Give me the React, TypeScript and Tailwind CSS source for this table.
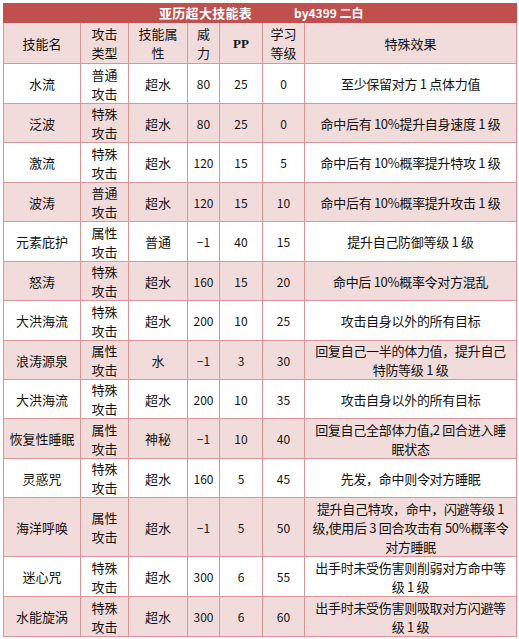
import React from "react";

type Row = {
  name: string;
  type: [string, string];
  attr: string;
  power: string;
  pp: string;
  level: string;
  effect: string[];
  h: string;
};

const rows: Row[] = [
  { name: "水流", type: ["普通", "攻击"], attr: "超水", power: "80", pp: "25", level: "0", effect: ["至少保留对方 1 点体力值"], h: "h-[40px]" },
  { name: "泛波", type: ["特殊", "攻击"], attr: "超水", power: "80", pp: "25", level: "0", effect: ["命中后有 10%提升自身速度 1 级"], h: "h-[39px]" },
  { name: "激流", type: ["特殊", "攻击"], attr: "超水", power: "120", pp: "15", level: "5", effect: ["命中后有 10%概率提升特攻 1 级"], h: "h-[40px]" },
  { name: "波涛", type: ["普通", "攻击"], attr: "超水", power: "120", pp: "15", level: "10", effect: ["命中后有 10%概率提升攻击 1 级"], h: "h-[39px]" },
  { name: "元素庇护", type: ["属性", "攻击"], attr: "普通", power: "−1", pp: "40", level: "15", effect: ["提升自己防御等级 1 级"], h: "h-[40px]" },
  { name: "怒涛", type: ["特殊", "攻击"], attr: "超水", power: "160", pp: "15", level: "20", effect: ["命中后 10%概率令对方混乱"], h: "h-[39px]" },
  { name: "大洪海流", type: ["特殊", "攻击"], attr: "超水", power: "200", pp: "10", level: "25", effect: ["攻击自身以外的所有目标"], h: "h-[40px]" },
  { name: "浪涛源泉", type: ["属性", "攻击"], attr: "水", power: "−1", pp: "3", level: "30", effect: ["回复自己一半的体力值，提升自己", "特防等级 1 级"], h: "h-[39px]" },
  { name: "大洪海流", type: ["特殊", "攻击"], attr: "超水", power: "200", pp: "10", level: "35", effect: ["攻击自身以外的所有目标"], h: "h-[39px]" },
  { name: "恢复性睡眠", type: ["属性", "攻击"], attr: "神秘", power: "−1", pp: "10", level: "40", effect: ["回复自己全部体力值,2 回合进入睡", "眠状态"], h: "h-[40px]" },
  { name: "灵惑咒", type: ["特殊", "攻击"], attr: "超水", power: "160", pp: "5", level: "45", effect: ["先发，命中则令对方睡眠"], h: "h-[39px]" },
  { name: "海洋呼唤", type: ["属性", "攻击"], attr: "超水", power: "−1", pp: "5", level: "50", effect: ["提升自己特攻，命中，闪避等级 1", "级,使用后 3 回合攻击有 50%概率令", "对方睡眠"], h: "h-[59px]" },
  { name: "迷心咒", type: ["特殊", "攻击"], attr: "超水", power: "300", pp: "6", level: "55", effect: ["出手时未受伤害则削弱对方命中等", "级 1 级"], h: "h-[40px]" },
  { name: "水能旋涡", type: ["特殊", "攻击"], attr: "超水", power: "300", pp: "6", level: "60", effect: ["出手时未受伤害则吸取对方闪避等", "级 1 级"], h: "h-[40px]" },
];

const cell = "border border-[#d99694] text-center align-middle p-0 leading-[19px] whitespace-nowrap";

export default function App() {
  return (
    <div className="pt-[3px] pl-[3px] bg-white min-h-[639px] text-[12px] text-[#111] [font-family:'Noto_Sans_CJK_SC',sans-serif]">
      <table className="table-fixed border-collapse w-[513px]">
        <colgroup>
          <col className="w-[77px]" />
          <col className="w-[48px]" />
          <col className="w-[59px]" />
          <col className="w-[32px]" />
          <col className="w-[43px]" />
          <col className="w-[42px]" />
          <col className="w-[212px]" />
        </colgroup>
        <tbody>
          <tr className="h-[19px] bg-[#c0504d]">
            <td colSpan={7} className="border border-[#c0504d] p-0 align-middle leading-[18px] text-white font-bold">
              <div className="flex items-center pl-[155px]">
                <span className="w-[135px] text-[13px] tracking-[0.3px]">亚历超大技能表</span>
                <span className="text-[12px]">by4399 二白</span>
              </div>
            </td>
          </tr>
          <tr className="h-[41px] bg-[#f2dcdb]">
            <td className={`${cell} text-[13px]`}>技能名</td>
            <td className={`${cell} text-[13px]`}>攻击<br />类型</td>
            <td className={`${cell} text-[13px]`}>技能属<br />性</td>
            <td className={`${cell} text-[13px]`}>威<br />力</td>
            <td className={`${cell} font-bold text-[13px] [font-family:'Liberation_Serif',serif]`}>PP</td>
            <td className={`${cell} text-[13px]`}>学习<br />等级</td>
            <td className={`${cell} text-[13px]`}>特殊效果</td>
          </tr>
          {rows.map((r, i) => (
            <tr key={i} className={`${r.h} ${i % 2 === 1 ? "bg-[#f2dcdb]" : "bg-white"}`}>
              <td className={`${cell} text-[13px]`}>{r.name}</td>
              <td className={`${cell} text-[13px]`}>{r.type[0]}<br />{r.type[1]}</td>
              <td className={`${cell} text-[13px]`}>{r.attr}</td>
              <td className={cell}>{r.power}</td>
              <td className={cell}>{r.pp}</td>
              <td className={cell}>{r.level}</td>
              <td className={`${cell} text-[13px] tracking-[-0.3px]`}>
                {r.effect.map((l, j) => (
                  <React.Fragment key={j}>
                    {j > 0 && <br />}
                    {l}
                  </React.Fragment>
                ))}
              </td>
            </tr>
          ))}
        </tbody>
      </table>
    </div>
  );
}
